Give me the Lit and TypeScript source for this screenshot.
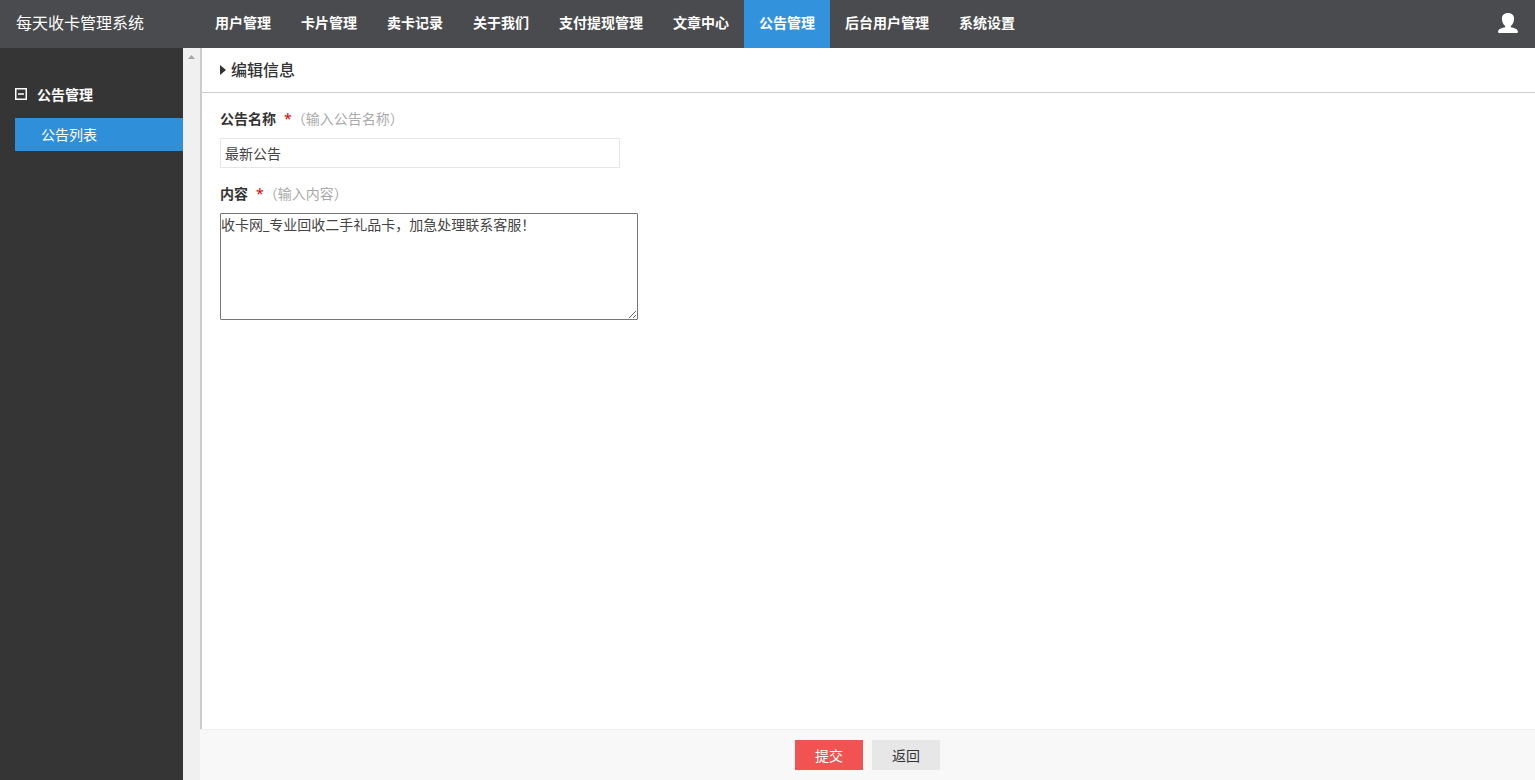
import { LitElement, html, css } from "lit";
import { customElement, state } from "lit/decorators.js";
import { classMap } from "lit/directives/class-map.js";

const NAV = [
  "用户管理",
  "卡片管理",
  "卖卡记录",
  "关于我们",
  "支付提现管理",
  "文章中心",
  "公告管理",
  "后台用户管理",
  "系统设置",
];

@customElement("app-header")
class AppHeader extends LitElement {
  @state() active = "公告管理";

  static styles = css`
    :host {
      display: flex;
      height: 48px;
      background: #4a4b4e;
      color: #fff;
    }
    .brand {
      width: 200px;
      box-sizing: border-box;
      padding-left: 16px;
      font-size: 16px;
      line-height: 46px;
      white-space: nowrap;
    }
    .nav {
      display: flex;
      flex: 1;
    }
    .link {
      padding: 0 15px;
      font-size: 14px;
      font-weight: 700;
      line-height: 46px;
      color: #fff;
      text-decoration: none;
      white-space: nowrap;
    }
    .active {
      background: #3292db;
    }
    .user {
      display: flex;
      align-items: center;
      padding: 0 17px 2px;
      border: 0;
      background: none;
      color: #fff;
    }
  `;

  render() {
    return html`
      <div class="brand">每天收卡管理系统</div>
      <nav class="nav">
        ${NAV.map(
          (n) => html`<a
            href="#"
            class=${classMap({ link: true, active: n === this.active })}
            @click=${(e: Event) => {
              e.preventDefault();
              this.active = n;
            }}
            >${n}</a
          >`
        )}
      </nav>
      <button class="user" aria-label="用户">
        <svg width="20" height="20" viewBox="0 0 20 20" fill="currentColor">
          <path
            d="M10 0C6 0 3.700 2.400 3.900 6c.1 3 1.400 5.600 3.300 7.100v1.200C4 15 .8 15.900.2 18c-.2.800-.1 2 .6 2h18.400c.7 0 .8-1.200.6-2-.6-2.100-3.800-3-7-3.700v-1.200c1.900-1.500 3.200-4.100 3.300-7.100C16.300 2.400 14 0 10 0z"
          />
        </svg>
      </button>
    `;
  }
}

@customElement("app-sidebar")
class AppSidebar extends LitElement {
  static styles = css`
    :host {
      display: flex;
      width: 200px;
      background: #353535;
      color: #fff;
    }
    .menu {
      flex: 1;
      padding: 35px 0 0 15px;
    }
    .group {
      display: flex;
      align-items: center;
      gap: 10px;
      height: 24px;
      margin-bottom: 11px;
      padding: 0;
      border: 0;
      background: none;
      color: #fff;
      font: inherit;
      font-size: 14px;
      font-weight: 700;
      line-height: 24px;
    }
    .toggle {
      margin-bottom: 3px;
    }
    .item {
      display: block;
      padding-left: 26px;
      background: #2f8fd9;
      color: #fff;
      font-size: 14px;
      line-height: 33px;
      text-decoration: none;
    }
    .track {
      width: 17px;
      background: #f0f0f0;
    }
    .arrow {
      display: block;
      margin: 7px auto 0;
    }
  `;

  render() {
    return html`
      <nav class="menu">
        <button class="group" aria-expanded="true">
          <svg class="toggle" width="12" height="12" viewBox="0 0 12 12">
            <path d="M.75.75h10.500v10.500H.75zM3 6h6" fill="none" stroke="#fff" stroke-width="1.500" />
          </svg>
          公告管理
        </button>
        <a class="item" href="#" aria-current="page">公告列表</a>
      </nav>
      <div class="track" aria-hidden="true">
        <svg class="arrow" width="7" height="4" viewBox="0 0 7 4">
          <path d="M0 4 3.500 0 7 4z" fill="#a3a3a3" />
        </svg>
      </div>
    `;
  }
}

@customElement("notice-form")
class NoticeForm extends LitElement {
  static styles = css`
    :host {
      display: flex;
      flex: 1;
      min-width: 0;
    }
    .form {
      display: flex;
      flex: 1;
      flex-direction: column;
      min-width: 0;
    }
    .body {
      flex: 1;
      border-left: 2px solid #ccc;
      background: #fff;
    }
    .title {
      display: flex;
      align-items: center;
      gap: 5px;
      margin: 0;
      padding-left: 18px;
      border-bottom: 1px solid #ccc;
      color: #333;
      font-size: 16px;
      font-weight: 500;
      line-height: 44px;
    }
    .fields {
      display: flex;
      flex-direction: column;
      align-items: flex-start;
      gap: 15px;
      padding: 15px 18px;
    }
    .field {
      display: flex;
      flex-direction: column;
      align-items: flex-start;
      gap: 8px;
      max-width: 100%;
    }
    .label {
      color: #333;
      font-size: 14px;
      line-height: 22px;
    }
    .name {
      margin-right: 8px;
      font-weight: 700;
    }
    .star {
      color: #d00;
    }
    .hint {
      color: #aaa;
    }
    .text,
    .area {
      box-sizing: border-box;
      max-width: 100%;
      margin: 0;
      background: #fff;
      color: #444;
      font: inherit;
      font-size: 14px;
    }
    .text {
      width: 400px;
      height: 30px;
      padding: 0 4px;
      border: 1px solid #e6e6e6;
    }
    .area {
      width: 418px;
      height: 107px;
      padding: 0;
      border: 1px solid #767676;
      border-radius: 1px;
      line-height: 22px;
    }
    .actions {
      display: flex;
      justify-content: center;
      gap: 9px;
      padding: 10px 0;
      border-top: 1px solid #eee;
      background: #f8f8f8;
    }
    .button {
      width: 68px;
      height: 30px;
      padding: 0;
      border: 0;
      background: #e7e7e7;
      color: #333;
      font: inherit;
      font-size: 14px;
    }
    .primary {
      background: #f15352;
      color: #fff;
    }
  `;

  render() {
    return html`
      <form class="form" @submit=${(e: Event) => e.preventDefault()}>
        <div class="body">
          <h1 class="title">
            <svg width="6" height="10" viewBox="0 0 6 10"><path d="M0 0 6 5 0 10z" fill="#333" /></svg>
            编辑信息
          </h1>
          <div class="fields">
            <div class="field">
              <label class="label" for="name"
                ><span class="name">公告名称</span><span class="star">*</span
                ><span class="hint">（输入公告名称）</span></label
              >
              <input class="text" id="name" type="text" .value=${"最新公告"} />
            </div>
            <div class="field">
              <label class="label" for="content"
                ><span class="name">内容</span><span class="star">*</span
                ><span class="hint">（输入内容）</span></label
              >
              <textarea
                class="area"
                id="content"
                .value=${"收卡网_专业回收二手礼品卡，加急处理联系客服！"}
              ></textarea>
            </div>
          </div>
        </div>
        <div class="actions">
          <button class="button primary" type="submit">提交</button>
          <button class="button" type="button">返回</button>
        </div>
      </form>
    `;
  }
}

@customElement("app-root")
class AppRoot extends LitElement {
  static styles = css`
    :host {
      display: flex;
      flex-direction: column;
      min-height: 100vh;
      font-family: "Noto Sans", "Noto Sans CJK SC", sans-serif;
    }
    .main {
      display: flex;
      flex: 1;
    }
  `;

  render() {
    return html`
      <app-header></app-header>
      <div class="main">
        <app-sidebar></app-sidebar>
        <notice-form></notice-form>
      </div>
    `;
  }
}
